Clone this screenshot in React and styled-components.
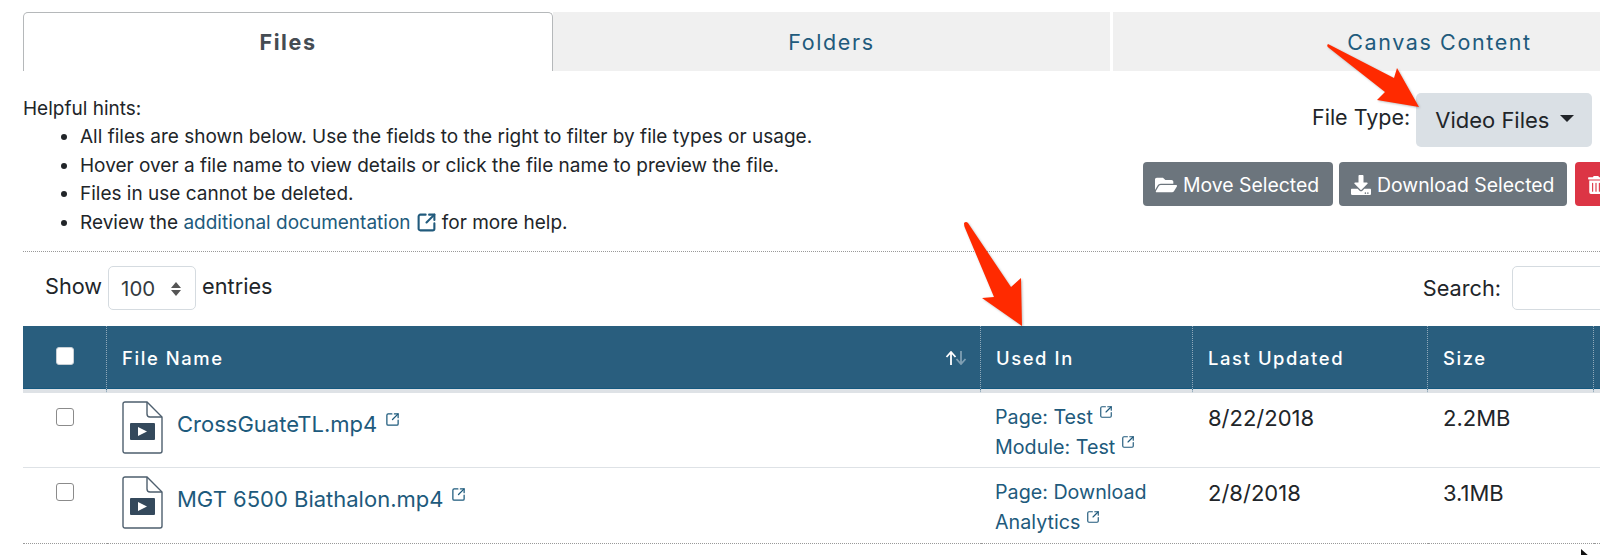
import React from 'react';
import styled, { createGlobalStyle } from 'styled-components';
import { SquareArrowOutUpRight } from 'lucide-react';
import { FaFolderOpen, FaDownload, FaTrashAlt } from 'react-icons/fa';

const GlobalStyle = createGlobalStyle`
  html, body {
    margin: 0;
    padding: 0;
    background: #fff;
    overflow: hidden;
  }
  body {
    font-family: Inter, "Liberation Sans", sans-serif;
    color: #212529;
  }
`;

const Screen = styled.div`
  position: relative;
  width: 1600px;
  height: 555px;
  overflow: hidden;
`;

const Page = styled.div`
  width: 1743px;
  margin-left: 23px;
  padding-top: 12px;
`;

/* tabs */
const TabBar = styled.div`
  display: flex;
  height: 59px;
`;

const Tab = styled.div`
  flex: 0 0 ${(p) => p.$width}px;
  margin-left: ${(p) => p.$gap || 0}px;
  box-sizing: border-box;
  display: flex;
  align-items: center;
  justify-content: center;
  font-size: 21.5px;
  letter-spacing: 1.6px;
  color: ${(p) => (p.$active ? '#454c53' : '#215a7c')};
  font-weight: ${(p) => (p.$active ? 700 : 400)};
  background: ${(p) => (p.$active ? '#fff' : '#f0f0f0')};
  border: ${(p) => (p.$active ? '1px solid #b5b8ba' : 'none')};
  border-bottom: none;
  border-radius: ${(p) => (p.$active ? '5px 5px 0 0' : '0')};
`;

/* hints + filters */
const ToolSection = styled.div`
  display: flex;
  height: 159px;
  margin-top: 22px;
  box-sizing: border-box;
  border-bottom: 1px dotted #999;
`;

const Hints = styled.div`
  flex: 0 0 1120px;
  font-size: 19px;
  line-height: 28.4px;
  padding-top: 2px;
`;

const HintList = styled.ul`
  margin: 0;
  padding-left: 57px;
`;

const DocLink = styled.a`
  color: #215a7c;
  text-decoration: none;
`;

const Filters = styled.div`
  display: flex;
  flex-direction: column;
  gap: 15px;
`;

const FileTypeRow = styled.div`
  display: flex;
  align-items: flex-start;
  gap: 6px;
  padding-left: 169px;
`;

const FileTypeLabel = styled.span`
  font-size: 21.5px;
  line-height: 48px;
`;

const DropButton = styled.div`
  display: flex;
  align-items: center;
  justify-content: space-between;
  box-sizing: border-box;
  width: 176px;
  height: 54px;
  padding: 0 18px 0 19px;
  background: #dae0e5;
  border-radius: 5px;
  font-size: 22px;
`;

const Caret = styled.span`
  width: 0;
  height: 0;
  margin-bottom: 4px;
  border-left: 7px solid transparent;
  border-right: 7px solid transparent;
  border-top: 7px solid #212529;
`;

const ActionRow = styled.div`
  display: flex;
  gap: 6px;
`;

const ActionButton = styled.div`
  display: flex;
  align-items: center;
  gap: 6px;
  flex: 0 0 auto;
  box-sizing: border-box;
  height: 44px;
  width: ${(p) => p.$width}px;
  margin-left: ${(p) => p.$gap || 0}px;
  padding: 1px 0 0 12px;
  border-radius: 4px;
  color: #fff;
  font-size: 19.4px;
  background: ${(p) => p.$bg};
  white-space: nowrap;
`;

/* show entries + search */
const ControlRow = styled.div`
  display: flex;
  justify-content: space-between;
  height: 74px;
  box-sizing: border-box;
  padding: 14px 0 0 22px;
`;

const ControlGroup = styled.div`
  display: flex;
  align-items: flex-start;
  gap: 6px;
  font-size: 21.7px;
  line-height: 40px;
`;

const EntrySelect = styled.div`
  display: flex;
  align-items: center;
  justify-content: space-between;
  box-sizing: border-box;
  width: 88px;
  height: 44px;
  padding: 2px 13px 0 12px;
  border: 1px solid #d5dbe0;
  border-radius: 5px;
  font-size: 20.4px;
  color: #343a40;
`;

const SearchLabel = styled.span`
  margin: 2px 5px 0 0;
`;

const SearchBox = styled.div`
  width: 254px;
  height: 44px;
  box-sizing: border-box;
  border: 1px solid #d5dbe0;
  border-radius: 5px;
`;

/* table */
const Table = styled.table`
  width: 1743px;
  table-layout: fixed;
  border-collapse: separate;
  border-spacing: 0;
`;

const HeadCell = styled.th`
  height: 67px;
  box-sizing: border-box;
  padding: 0 0 0 ${(p) => p.$pad ?? 15}px;
  position: relative;
  text-align: left;
  font-size: 18.4px;
  font-weight: 500;
  letter-spacing: 1.6px;
  color: #fff;
  background: #295e7e;
  border-right: 1px dotted #8fa9ba;
  border-bottom: 4px solid #dee2e6;
  box-shadow: inset 0 -1px 0 #14587f;
`;

const BodyCell = styled.td`
  vertical-align: top;
  box-sizing: border-box;
  height: ${(p) => (p.$last ? 76 : 75)}px;
  padding: 8px 0 0 ${(p) => p.$pad ?? 15}px;
  border-bottom: 1px ${(p) => (p.$last ? 'dotted #999' : 'solid #dee2e6')};
  font-size: 22px;
  line-height: 34px;
`;

const Check = styled.input.attrs({ type: 'checkbox' })`
  appearance: none;
  display: block;
  width: 18px;
  height: 18px;
  margin: ${(p) => (p.$head ? '-3px 0 0 33px' : '7px 0 0 33px')};
  background: #fff;
  border: 1px solid ${(p) => (p.$head ? '#c8d0d6' : '#8b8b8b')};
  border-radius: 3px;
`;

const NameWrap = styled.div`
  display: flex;
  align-items: flex-start;
  gap: 14px;
`;

const FileName = styled.a`
  color: #1d5a7c;
  text-decoration: none;
  font-size: 22px;
  line-height: 30px;
  margin-top: 8px;
`;

const UsedLink = styled.a`
  display: block;
  color: #215a7c;
  text-decoration: none;
  font-size: 19.7px;
  line-height: 30px;
`;

const UsedCell = styled(BodyCell)`
  padding-top: 9px;
  padding-left: 14px;
`;

const ExtIcon = styled(SquareArrowOutUpRight)`
  vertical-align: ${(p) => p.$lift ?? 5}px;
  margin-left: ${(p) => p.$gap ?? 6}px;
`;

const SortIcon = styled.svg`
  position: absolute;
  right: 13px;
  top: 25px;
`;

const Arrow = styled.svg`
  position: absolute;
  left: 0;
  top: 0;
  pointer-events: none;
  filter: drop-shadow(1px 1px 1px rgba(0, 0, 0, 0.25));
`;

const Cursor = styled.svg`
  position: absolute;
  left: 1580px;
  top: 549px;
`;

const FileIcon = () => (
  <svg width="41" height="53" viewBox="0 0 41 53" fill="none" style={{ flex: 'none' }}>
    <path
      d="M3 1h22l15 15v34a2 2 0 0 1-2 2H3a2 2 0 0 1-2-2V3a2 2 0 0 1 2-2z"
      stroke="#4e5f6e"
      strokeWidth="1.4"
    />
    <path d="M25 1v12a3 3 0 0 0 3 3h12" stroke="#4e5f6e" strokeWidth="1.4" />
    <rect x="8" y="22" width="25" height="17" rx="1" fill="#34495c" />
    <path d="M16 26l9 4.5-9 4.5z" fill="#fff" />
  </svg>
);

const hints = [
  'All files are shown below. Use the fields to the right to filter by file types or usage.',
  'Hover over a file name to view details or click the file name to preview the file.',
  'Files in use cannot be deleted.',
];

const files = [
  { name: 'CrossGuateTL.mp4', used: [['Page: Test'], ['Module: Test']], date: '8/22/2018', size: '2.2MB' },
  { name: 'MGT 6500 Biathalon.mp4', used: [['Page: Download'], ['Analytics']], date: '2/8/2018', size: '3.1MB' },
];

export default function App() {
  return (
    <Screen>
      <GlobalStyle />
      <Page>
        <TabBar>
          <Tab $active $width={530}>Files</Tab>
          <Tab $width={557}>Folders</Tab>
          <Tab $width={653} $gap={3}>Canvas Content</Tab>
        </TabBar>

        <ToolSection>
          <Hints>
            Helpful hints:
            <HintList>
              {hints.map((h) => (
                <li key={h}>{h}</li>
              ))}
              <li>
                Review the <DocLink href="#">additional documentation</DocLink>
                <ExtIcon size={21} strokeWidth={2.4} color="#215a7c" $lift={-4} $gap={5} /> for more help.
              </li>
            </HintList>
          </Hints>
          <Filters>
            <FileTypeRow>
              <FileTypeLabel>File Type:</FileTypeLabel>
              <DropButton>
                Video Files
                <Caret />
              </DropButton>
            </FileTypeRow>
            <ActionRow>
              <ActionButton $bg="#6c757d" $width={190}>
                <FaFolderOpen size={22} />
                Move Selected
              </ActionButton>
              <ActionButton $bg="#6c757d" $width={228}>
                <FaDownload size={20} />
                Download Selected
              </ActionButton>
              <ActionButton $bg="#dc3545" $width={190} $gap={2}>
                <FaTrashAlt size={18} />
                Delete Selected
              </ActionButton>
            </ActionRow>
          </Filters>
        </ToolSection>

        <ControlRow>
          <ControlGroup>
            Show
            <EntrySelect>
              100
              <svg width="12" height="16" viewBox="0 0 12 16">
                <path d="M6 1l5 6H1zM6 15l5-6H1z" fill="#555" />
              </svg>
            </EntrySelect>
            entries
          </ControlGroup>
          <ControlGroup>
            <SearchLabel>Search:</SearchLabel>
            <SearchBox />
          </ControlGroup>
        </ControlRow>

        <Table>
          <colgroup>
            <col style={{ width: 84 }} />
            <col style={{ width: 874 }} />
            <col style={{ width: 212 }} />
            <col style={{ width: 235 }} />
            <col style={{ width: 166 }} />
            <col />
          </colgroup>
          <thead>
            <tr>
              <HeadCell $pad={0}><Check $head aria-label="Select all" /></HeadCell>
              <HeadCell>
                File Name
                <SortIcon width="22" height="14" viewBox="0 0 22 14" fill="none" strokeWidth="1.8">
                  <path d="M6 14V1M1.5 6L6 1l4.5 5" stroke="#fff" />
                  <path d="M16 0v13M11.5 8l4.5 5 4.5-5" stroke="#7f9fb3" />
                </SortIcon>
              </HeadCell>
              <HeadCell>Used In</HeadCell>
              <HeadCell>Last Updated</HeadCell>
              <HeadCell>Size</HeadCell>
              <HeadCell />
            </tr>
          </thead>
          <tbody>
            {files.map((f, i) => {
              const last = i === files.length - 1;
              return (
                <tr key={f.name}>
                  <BodyCell $pad={0} $last={last}><Check aria-label={f.name} /></BodyCell>
                  <BodyCell $last={last}>
                    <NameWrap>
                      <FileIcon />
                      <FileName href="#">
                        {f.name}
                        <ExtIcon size={15} strokeWidth={2} $lift={5} $gap={8} />
                      </FileName>
                    </NameWrap>
                  </BodyCell>
                  <UsedCell $last={last}>
                    {f.used.map(([label], j) => (
                      <UsedLink href="#" key={label}>
                        {label}
                        {(!last || j === 1) && <ExtIcon size={14} strokeWidth={2} $lift={5} $gap={6} />}
                      </UsedLink>
                    ))}
                  </UsedCell>
                  <BodyCell $last={last}>{f.date}</BodyCell>
                  <BodyCell $last={last}>{f.size}</BodyCell>
                  <BodyCell $last={last} />
                </tr>
              );
            })}
          </tbody>
        </Table>
      </Page>

      <Arrow width="1600" height="555" viewBox="0 0 1600 555">
        <path
          d="M1328 44Q1326 46 1329 48L1385 92 1377 100 1419 107 1397 68 1394 78z"
          fill="#ff2a00"
        />
        <path
          d="M964 223Q964 226 965 228L994 297 982 298 1022 326 1021 278 1011 287 968 223Q966 221 964 223z"
          fill="#ff2a00"
        />
      </Arrow>

      <Cursor width="12" height="8" viewBox="0 0 12 8">
        <path d="M1 0l9 8H1z" fill="#111" />
      </Cursor>
    </Screen>
  );
}
